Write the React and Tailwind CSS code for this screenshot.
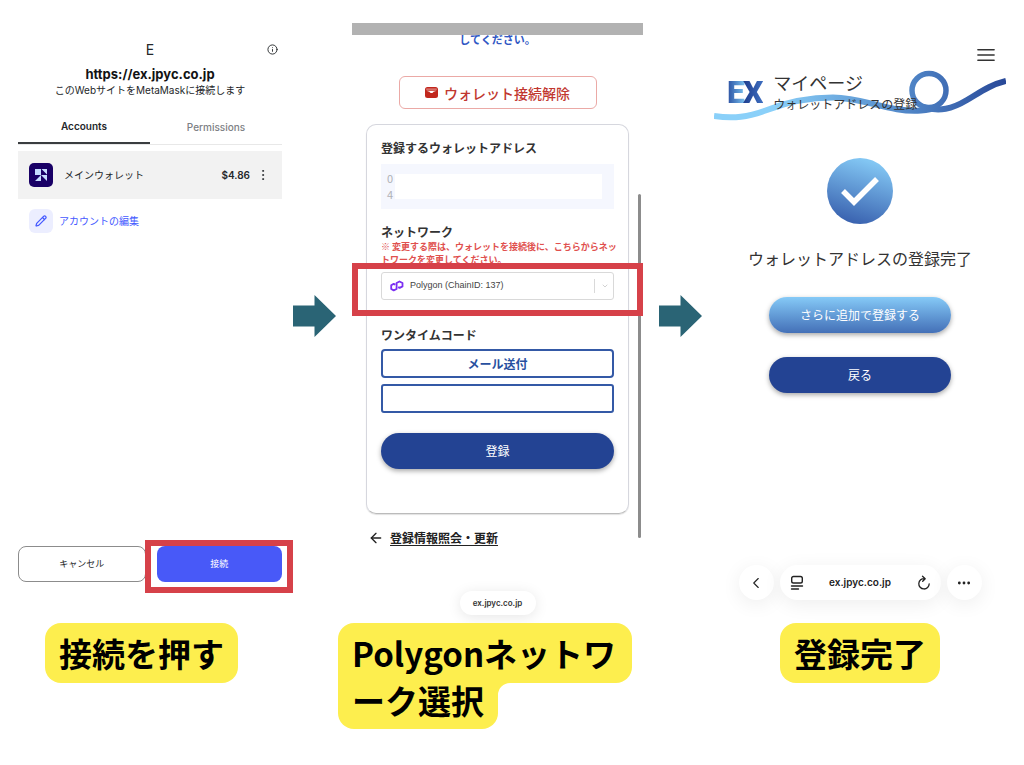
import { Info, Pencil, EllipsisVertical, ChevronDown, ChevronLeft, ArrowLeft, Ellipsis, Menu } from 'lucide-react'
import clsx from 'clsx'

const jp = "font-['Noto_Sans_CJK_JP',sans-serif]"
const latin = "font-['Inter','Noto_Sans_CJK_JP',sans-serif]"

function StepArrow({ className }) {
  return (
    <svg viewBox="0 0 43 42" className={clsx('w-[43px] h-[42px] mt-[295px]', className)} aria-hidden="true">
      <path d="M0 10.500H21.500V0L43 21L21.500 42V31.500H0Z" fill="#2a6475" />
    </svg>
  )
}

function Highlight({ className }) {
  return <div className={clsx('absolute z-10 border-6 border-[#d64149] pointer-events-none', className)} />
}

function Caption({ children, className }) {
  return (
    <p className={clsx('w-max h-[60px] px-3.5 rounded-2xl bg-[#fdee4e] text-[33px] leading-[60px] font-bold text-black', className)}>
      {children}
    </p>
  )
}

function AccountIcon() {
  return (
    <svg viewBox="0 0 24 24" className="w-6 h-6" aria-hidden="true">
      <rect width="24" height="24" rx="5" fill="#190066" />
      <path d="M6 6h6v6H6zM12.500 6H18v5.500zM12 12h6v6zM6 18l6-6v6z" fill="#c5dcff" />
    </svg>
  )
}

function PolygonIcon() {
  return (
    <svg viewBox="0 0 14 12" className="absolute left-[9px] top-2 w-3.5 h-3" fill="none" stroke="#7b2ff2" strokeWidth="1.800" strokeLinejoin="round" aria-hidden="true">
      <path d="M5.300 4.600L3.700 3.900L1.200 5.300V9L3.700 10.400L6.600 9V3L9.500 1.500L12.500 3V6.400L9.700 7.900L8.200 7.100" />
    </svg>
  )
}

function WalletIcon() {
  return (
    <svg viewBox="0 0 13 11" className="w-[13px] h-[11px]" aria-hidden="true">
      <rect width="13" height="11" rx="2.500" fill="#c1271d" />
      <path d="M1.200 2.100h10.600" stroke="#f3c4c0" strokeWidth="0.800" />
      <path d="M1.200 3.800H11.800L8.500 4.800C8 6.400 5 6.400 4.500 4.800Z" fill="#fff" />
    </svg>
  )
}

function ReaderIcon() {
  return (
    <svg viewBox="0 0 14 16" className="w-3.5 h-4" fill="none" stroke="#222" strokeWidth="1.400" strokeLinecap="round" aria-hidden="true">
      <rect x="1.700" y="1.500" width="10.600" height="6.500" rx="1.800" />
      <path d="M1.500 11h11M1.500 14h7" />
    </svg>
  )
}

function ReloadIcon() {
  return (
    <svg viewBox="0 0 14 16" className="w-3.5 h-4" fill="none" stroke="#222" strokeWidth="1.300" strokeLinecap="round" strokeLinejoin="round" aria-hidden="true">
      <path d="M7.500 3.600A5.200 5.200 0 1 0 12.200 8.800M5.500 1.200L8.200 3.700L5.700 6.300" />
    </svg>
  )
}

function ConnectScreen() {
  return (
    <section className={clsx('flex flex-col pt-10 pb-[33px] pr-[11px] text-[#24272a]', latin)}>
      <header className="relative text-center">
        <div className="text-sm leading-5">E</div>
        <button aria-label="詳細" className="absolute right-1 top-1">
          <Info className="w-[11px] h-[11px]" />
        </button>
        <h2 className="mt-1 text-[13px] leading-5 font-bold text-[#121314]">https://ex.jpyc.co.jp</h2>
        <p className="text-[10px] leading-3">このWebサイトをMetaMaskに接続します</p>
      </header>
      <div className="mt-5 flex border-b border-[#e8e8e8] text-[10px] leading-5">
        <button className="flex-1 pb-1.5 border-b-2 border-[#3a3d40] font-semibold">Accounts</button>
        <button className="flex-1 pb-1.5 text-[#7d8084] font-medium">Permissions</button>
      </div>
      <div className="mt-1.5 h-12 pl-[11px] pr-3 flex items-center bg-[#f2f2f2]">
        <AccountIcon />
        <span className="ml-[11px] flex-1 text-[10px]">メインウォレット</span>
        <span className="text-[10px] font-semibold">$4.86</span>
        <button aria-label="メニュー" className="ml-1.5">
          <EllipsisVertical className="w-3.5 h-3.5" strokeWidth={1.5} />
        </button>
      </div>
      <button className="mt-2.5 ml-[11px] flex items-center gap-1.5 self-start text-[10px] text-[#4459ff]">
        <span className="w-6 h-6 rounded-md bg-[#eceeff] flex items-center justify-center">
          <Pencil className="w-3 h-3" strokeWidth={2.5} />
        </span>
        アカウントの編集
      </button>
      <div className="mt-auto flex gap-[11px] text-[9px]">
        <button className="flex-1 h-9 rounded-lg border border-[#8c8c8c]">キャンセル</button>
        <div className="relative flex-1">
          <button className="w-full h-9 rounded-lg bg-[#4859f8] text-white">接続</button>
          <Highlight className="-left-3 -right-[11px] -top-1.5 -bottom-[11px]" />
        </div>
      </div>
    </section>
  )
}

function RegisterScreen() {
  return (
    <section className={clsx('relative pt-[23px] text-[#333]', jp)}>
      <div className="relative z-10 h-3 bg-[#b2b2b2]" />
      <p className="-mt-1 text-center text-[11px] leading-4 font-bold text-[#2f57c4]">してください。</p>
      <button className="mx-auto mt-[29px] w-[198px] h-[33px] flex items-center justify-center gap-1.5 rounded-md border border-[#eba9a6] text-sm font-medium text-[#c1372f]">
        <WalletIcon />
        ウォレット接続解除
      </button>
      <form className="mx-3.5 mt-[15px] px-3.5 pt-[15px] pb-11 rounded-[10px] border border-[#d6d7de] border-b-[#bbb] shadow-[0_1px_1px_rgba(0,0,0,0.12)]" onSubmit={(e) => e.preventDefault()}>
        <h3 className="text-xs leading-4 font-bold">登録するウォレットアドレス</h3>
        <div className="mt-2 h-[45px] px-1.5 py-1.5 flex items-stretch bg-[#f5f7fe] text-[11px] leading-4 text-[#b0b1b6]">
          <div className="w-2">
            <div>0</div>
            <div>4</div>
          </div>
          <div className="flex-1 my-1 mr-1.5 bg-white" />
        </div>
        <label htmlFor="network" className="mt-[15px] block text-xs leading-4 font-bold">ネットワーク</label>
        <p className="-mr-2 text-[9px] leading-[13px] font-bold text-[#e0504e]">
          ※ 変更する際は、ウォレットを接続後に、こちらからネットワークを変更してください。
        </p>
        <div className="relative mt-1.5">
          <select id="network" className="block w-full h-7 pl-7 appearance-none rounded-[3px] border border-[#d9d9d9] bg-white font-['Liberation_Sans',sans-serif] text-[9px] text-[#444]">
            <option>Polygon (ChainID: 137)</option>
          </select>
          <PolygonIcon />
          <div className="absolute right-0 inset-y-[7px] w-5 border-l border-[#d9d9d9] flex items-center justify-center pointer-events-none">
            <ChevronDown className="w-2 h-2 text-[#bbb]" />
          </div>
          <Highlight className="-inset-x-[29px] -top-[9px] -bottom-4" />
        </div>
        <label htmlFor="code" className="mt-[27px] block text-xs leading-4 font-bold">ワンタイムコード</label>
        <button className="mt-1.5 w-full h-[29px] rounded border-2 border-[#3459a6] text-xs font-bold text-[#28509f]">メール送付</button>
        <input id="code" type="text" className="block mt-1.5 w-full h-[29px] px-2 rounded-[3px] border-2 border-[#3459a6]" />
        <button className="mt-5 w-full h-9 rounded-full bg-[#234393] text-xs text-white shadow-[0_2px_5px_rgba(0,0,0,0.35)]">登録</button>
      </form>
      <a href="#info" className="ml-4 mt-4 w-max flex items-center gap-1.5 text-xs leading-4 font-bold text-[#222]">
        <ArrowLeft className="w-4 h-4" />
        <span className="underline underline-offset-2">登録情報照会・更新</span>
      </a>
      <div className={clsx('mx-auto mt-[45px] w-[76px] h-6 rounded-full bg-white text-center text-[8px] leading-6 font-semibold shadow-[0_2px_14px_rgba(0,0,0,0.1)]', latin)}>
        ex.jpyc.co.jp
      </div>
      <div className="absolute right-0.5 top-[194px] w-[3px] h-[344px] rounded-full bg-[#8c8c8c]" />
    </section>
  )
}

function Ribbon() {
  return (
    <svg viewBox="0 0 292 56" className="absolute inset-x-0 top-[68px] w-full" fill="none" stroke="url(#ribbon)" strokeWidth="6" aria-hidden="true">
      <defs>
        <linearGradient id="ribbon" gradientUnits="userSpaceOnUse" x1="0" y1="0" x2="292" y2="0">
          <stop offset="0.200" stopColor="#8ad0f9" />
          <stop offset="0.700" stopColor="#4c80c3" />
          <stop offset="1" stopColor="#284898" />
        </linearGradient>
      </defs>
      <path d="M0 48C20 51 34 49 53 42C76 33 96 29.500 119 29.500C150 29.500 176 45 207 42.500C213 42 218 41 222 39" />
      <circle cx="215" cy="22.500" r="17" strokeWidth="5.500" />
      <path d="M208 39C226 44 238 41 253 32C268 23 276 17 292 13" />
    </svg>
  )
}

function DoneScreen() {
  return (
    <section className={clsx('relative flex flex-col items-center pt-[46px] text-[#333]', jp)}>
      <button aria-label="メニュー" className="self-end mr-2">
        <Menu className="w-6 h-[18px]" strokeWidth={1.8} preserveAspectRatio="none" />
      </button>
      <Ribbon />
      <header className="relative self-stretch flex items-center mt-1.5 pl-[13px] gap-2.5">
        <div className="font-['Roboto',sans-serif] text-[32px] leading-8 font-black flex" aria-label="EX">
          <span className="bg-linear-to-r from-[#2b4d9f] to-[#7cc3f0] bg-clip-text text-transparent">E</span>
          <span className="-ml-0.5 bg-linear-to-r from-[#1e3c8d] to-[#3f6fc0] bg-clip-text text-transparent">X</span>
        </div>
        <div>
          <h2 className="text-lg leading-6">マイページ</h2>
          <p className="text-xs leading-5">ウォレットアドレスの登録</p>
        </div>
      </header>
      <svg viewBox="0 0 66 66" className="mt-11 w-[66px] h-[66px]" aria-hidden="true">
        <defs>
          <linearGradient id="done" x1="0.650" y1="0" x2="0.350" y2="1">
            <stop offset="0.050" stopColor="#82c6f3" />
            <stop offset="1" stopColor="#3860ae" />
          </linearGradient>
        </defs>
        <circle cx="33" cy="33" r="33" fill="url(#done)" />
        <path d="M16 33L27 44L50 21" fill="none" stroke="#fff" strokeWidth="5.500" />
      </svg>
      <p className="mt-[22px] text-base leading-6">ウォレットアドレスの登録完了</p>
      <button className="mt-[27px] w-[182px] h-9 rounded-full bg-linear-to-b from-[#86caf7] to-[#4470b7] text-xs text-white shadow-[0_2px_5px_rgba(0,0,0,0.35)]">さらに追加で登録する</button>
      <button className="mt-6 w-[182px] h-9 rounded-full bg-[#234393] text-xs text-white shadow-[0_2px_5px_rgba(0,0,0,0.35)]">戻る</button>
      <nav className={clsx('mt-auto mb-[15px] flex gap-1.5 text-[#222]', latin)}>
        <button aria-label="戻る" className="w-[35px] h-[35px] rounded-full bg-white flex items-center justify-center shadow-[0_4px_20px_rgba(0,0,0,0.07)]">
          <ChevronLeft className="w-[18px] h-[18px]" strokeWidth={1.5} />
        </button>
        <div className="w-[161px] h-[35px] px-2.5 rounded-full bg-white flex items-center justify-between shadow-[0_4px_20px_rgba(0,0,0,0.07)]">
          <ReaderIcon />
          <span className="text-[10px] font-semibold">ex.jpyc.co.jp</span>
          <button aria-label="再読み込み">
            <ReloadIcon />
          </button>
        </div>
        <button aria-label="その他" className="w-[35px] h-[35px] rounded-full bg-white flex items-center justify-center shadow-[0_4px_20px_rgba(0,0,0,0.07)]">
          <Ellipsis className="w-4 h-4" strokeWidth={2.2} />
        </button>
      </nav>
    </section>
  )
}

export default function App() {
  return (
    <main className={clsx('min-h-screen px-[18px] pb-9 bg-white grid grid-cols-[275fr_59px_291fr_71px_292fr] content-start', jp)}>
      <ConnectScreen />
      <StepArrow />
      <RegisterScreen />
      <StepArrow className="ml-4" />
      <DoneScreen />

      <Caption className="relative mt-2 ml-[27px]">接続を押す</Caption>
      <div />
      <div className="relative mt-2 -ml-3.5 text-[33px] font-bold text-black">
        <p className="w-max h-[60px] pl-3.5 pr-4 rounded-2xl rounded-bl-none bg-[#fdee4e] leading-[60px]">Polygonネットワ</p>
        <p className="w-max h-[46px] px-3.5 rounded-b-2xl bg-[#fdee4e] leading-[34px]">ーク選択</p>
        <svg viewBox="0 0 12 12" className="absolute left-40 top-[60px] w-3 h-3" aria-hidden="true">
          <path d="M0 0H12A12 12 0 0 0 0 12Z" fill="#fdee4e" />
        </svg>
      </div>
      <div />
      <Caption className="relative mt-2 justify-self-center">登録完了</Caption>
    </main>
  )
}
